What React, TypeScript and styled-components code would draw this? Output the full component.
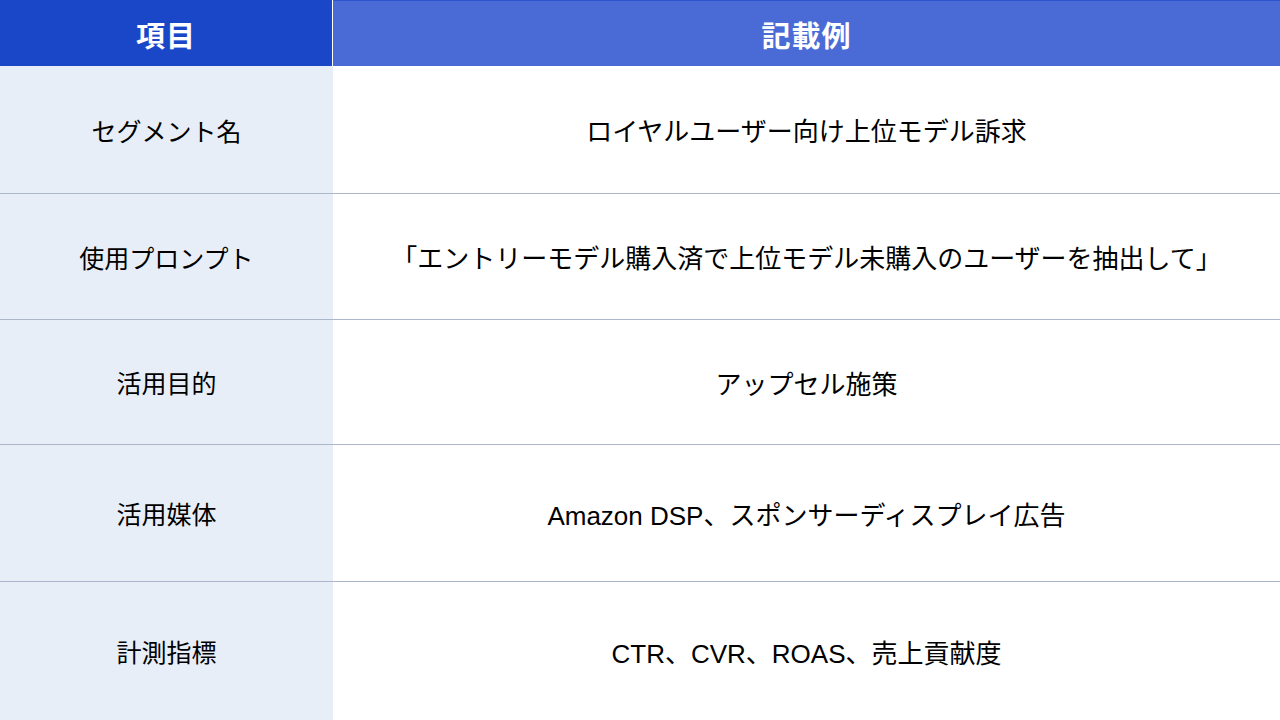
import styled, { createGlobalStyle } from "styled-components";

const GlobalStyle = createGlobalStyle`
  html, body {
    margin: 0;
    padding: 0;
    background: #ffffff;
  }
  body {
    font-family: "Liberation Sans", "Noto Sans CJK JP", sans-serif;
    color: #000;
  }
`

const rows = [
    {label: "セグメント名", value: "ロイヤルユーザー向け上位モデル訴求", height: 128},
    {label: "使用プロンプト", value: "「エントリーモデル購入済で上位モデル未購入のユーザーを抽出して」", height: 126},
    {label: "活用目的", value: "アップセル施策", height: 125},
    {label: "活用媒体", value: "Amazon DSP、スポンサーディスプレイ広告", height: 137},
    {label: "計測指標", value: "CTR、CVR、ROAS、売上貢献度", height: 138},
]

export default function App() {
    return (
        <>
            <GlobalStyle/>
            <Table>
                <HeadRow>
                    <HeadCell $dark>項目</HeadCell>
                    <HeadCell>記載例</HeadCell>
                </HeadRow>
                {rows.map((r, i) => (
                    <Row key={r.label} $height={r.height} $last={i === rows.length - 1}>
                        <LabelCell>{r.label}</LabelCell>
                        <ValueCell>{r.value}</ValueCell>
                    </Row>
                ))}
            </Table>
        </>
    );
}

const Table = styled.div`
  width: 1280px;
  height: 720px;
  display: flex;
  flex-direction: column;
  overflow: hidden;
`

const HeadRow = styled.div`
  display: grid;
  grid-template-columns: 332px 1fr;
  column-gap: 1px;
  height: 66px;
  background: #ffffff;
`

const HeadCell = styled.div<{ $dark?: boolean }>`
  display: flex;
  align-items: center;
  justify-content: center;
  background: ${p => p.$dark ? "#1a47c8" : "#4a6bd6"};
  border-top: 1px solid ${p => p.$dark ? "#1a47c8" : "#2f55cc"};
  color: #ffffff;
  font-weight: 700;
  font-size: 29px;
  letter-spacing: 1px;
`

const Row = styled.div<{ $height: number; $last?: boolean }>`
  display: grid;
  grid-template-columns: 333px 1fr;
  height: ${p => p.$height}px;
  box-sizing: border-box;
  border-bottom: ${p => p.$last ? "none" : "1px solid #abb6cb"};
`

const LabelCell = styled.div`
  display: flex;
  align-items: center;
  justify-content: center;
  background: #e8eef7;
  font-size: 25px;
`

const ValueCell = styled.div`
  display: flex;
  align-items: center;
  justify-content: center;
  background: #ffffff;
  font-size: 26px;
`
